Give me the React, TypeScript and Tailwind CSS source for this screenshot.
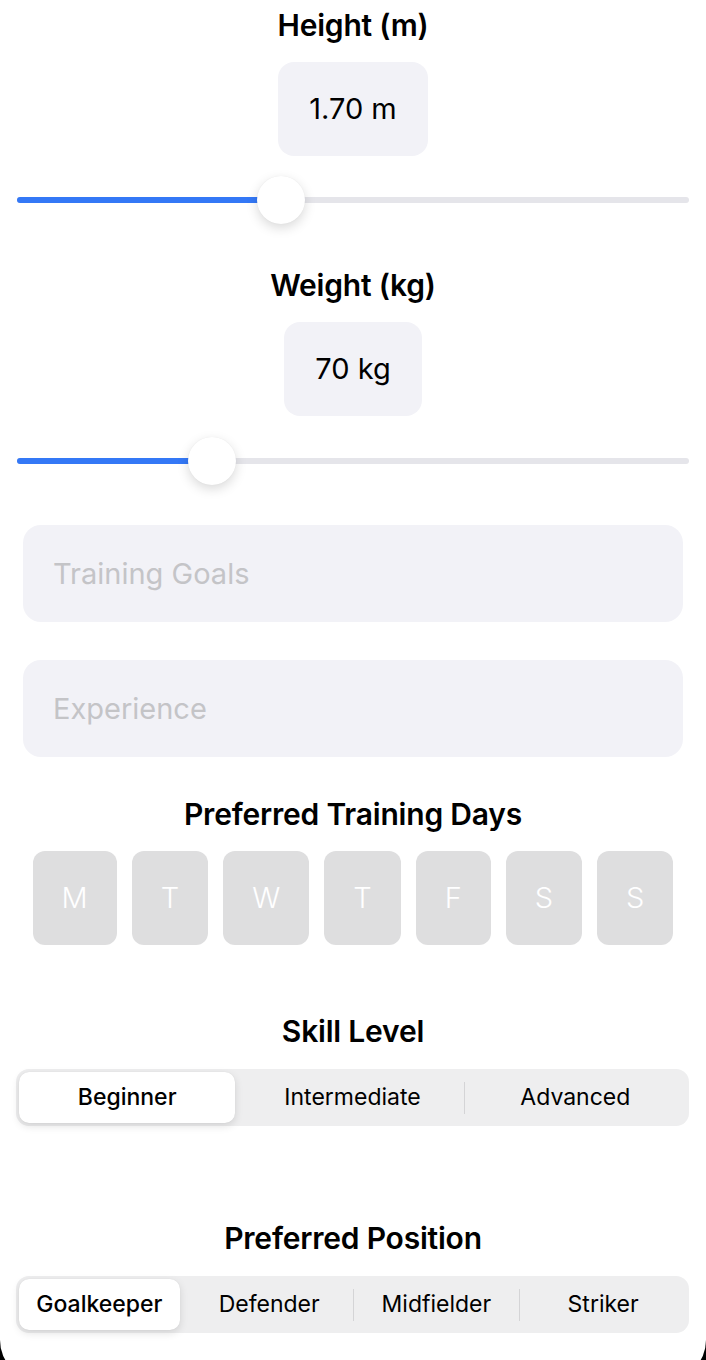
import React from "react";

const font = { fontFamily: "Inter, 'Noto Sans', sans-serif" };

const days = ["M", "T", "W", "T", "F", "S", "S"];

const Title = ({ children, className = "" }: { children: React.ReactNode; className?: string }) => (
  <h2 className={`text-center text-[30px] leading-[34px] font-semibold text-black tracking-[-0.2px] ${className}`}>
    {children}
  </h2>
);

const ValueBox = ({ value }: { value: string }) => (
  <div className="mx-auto mt-[20px] flex h-[94px] items-center justify-center rounded-[16px] bg-[#f2f2f7] px-[31px] text-[29px] text-black">
    {value}
  </div>
);

const Slider = ({ pct, className = "" }: { pct: number; className?: string }) => (
  <div className={`relative mx-[17px] h-[48px] ${className}`}>
    <div className="absolute left-0 right-0 top-[21px] h-[6px] rounded-full bg-[#e5e5ea]" />
    <div
      className="absolute left-0 top-[21px] h-[6px] rounded-full bg-[#3478f6]"
      style={{ width: `${pct}%` }}
    />
    <div
      className="absolute top-0 h-[48px] w-[48px] -translate-x-1/2 rounded-full bg-white shadow-[0_4px_12px_rgba(0,0,0,0.15),0_0_1px_rgba(0,0,0,0.08)]"
      style={{ left: `${pct}%` }}
    />
  </div>
);

const Field = ({ placeholder, className = "" }: { placeholder: string; className?: string }) => (
  <div className={`mx-[23px] flex h-[97px] items-center rounded-[18px] bg-[#f2f2f7] px-[30px] text-[29px] text-[#c4c4c7] ${className}`}>
    {placeholder}
  </div>
);

const Segmented = ({ items, selected, className = "" }: { items: string[]; selected: number; className?: string }) => (
  <div className={`ml-[16px] mr-[17px] flex h-[57px] rounded-[13px] bg-[#eeeeef] p-[3px] ${className}`}>
    {items.map((item, i) => {
      const active = i === selected;
      const showDivider = i > 0 && i !== selected && i - 1 !== selected;
      return (
        <div key={item} className="relative flex flex-1 items-center">
          {showDivider && <div className="h-[32px] w-px bg-[#d4d4d6]" />}
          <div
            className={`flex h-full flex-1 items-center justify-center rounded-[10px] text-[23px] text-black ${
              active
                ? "mr-[6px] bg-white font-medium shadow-[0_3px_8px_rgba(0,0,0,0.12),0_0_1px_rgba(0,0,0,0.1)]"
                : "font-normal"
            }`}
          >
            {item}
          </div>
        </div>
      );
    })}
  </div>
);

export default function App() {
  return (
    <div className="bg-black" style={font}>
      <div className="flex min-h-[1382px] flex-col rounded-b-[42px] bg-white pt-[8px]">
        <Title>Height (m)</Title>
        <div className="flex justify-center">
          <ValueBox value="1.70 m" />
        </div>
        <Slider pct={39.25} className="mt-[20px]" />

        <Title className="mt-[44px]">Weight (kg)</Title>
        <div className="flex justify-center">
          <ValueBox value="70 kg" />
        </div>
        <Slider pct={28.96} className="mt-[21px]" />

        <Field placeholder="Training Goals" className="mt-[40px]" />
        <Field placeholder="Experience" className="mt-[38px]" />

        <Title className="mt-[40px]">Preferred Training Days</Title>
        <div className="mt-[20px] flex justify-center gap-[15px]">
          {days.map((d, i) => (
            <div
              key={i}
              className="flex h-[94px] items-center justify-center rounded-[12px] bg-[#dededf] px-[29px] text-[29px] font-light text-white"
            >
              {d}
            </div>
          ))}
        </div>

        <Title className="mt-[69px]">Skill Level</Title>
        <Segmented items={["Beginner", "Intermediate", "Advanced"]} selected={0} className="mt-[21px]" />

        <Title className="mt-[95px]">Preferred Position</Title>
        <Segmented
          items={["Goalkeeper", "Defender", "Midfielder", "Striker"]}
          selected={0}
          className="mt-[21px]"
        />
      </div>
    </div>
  );
}
